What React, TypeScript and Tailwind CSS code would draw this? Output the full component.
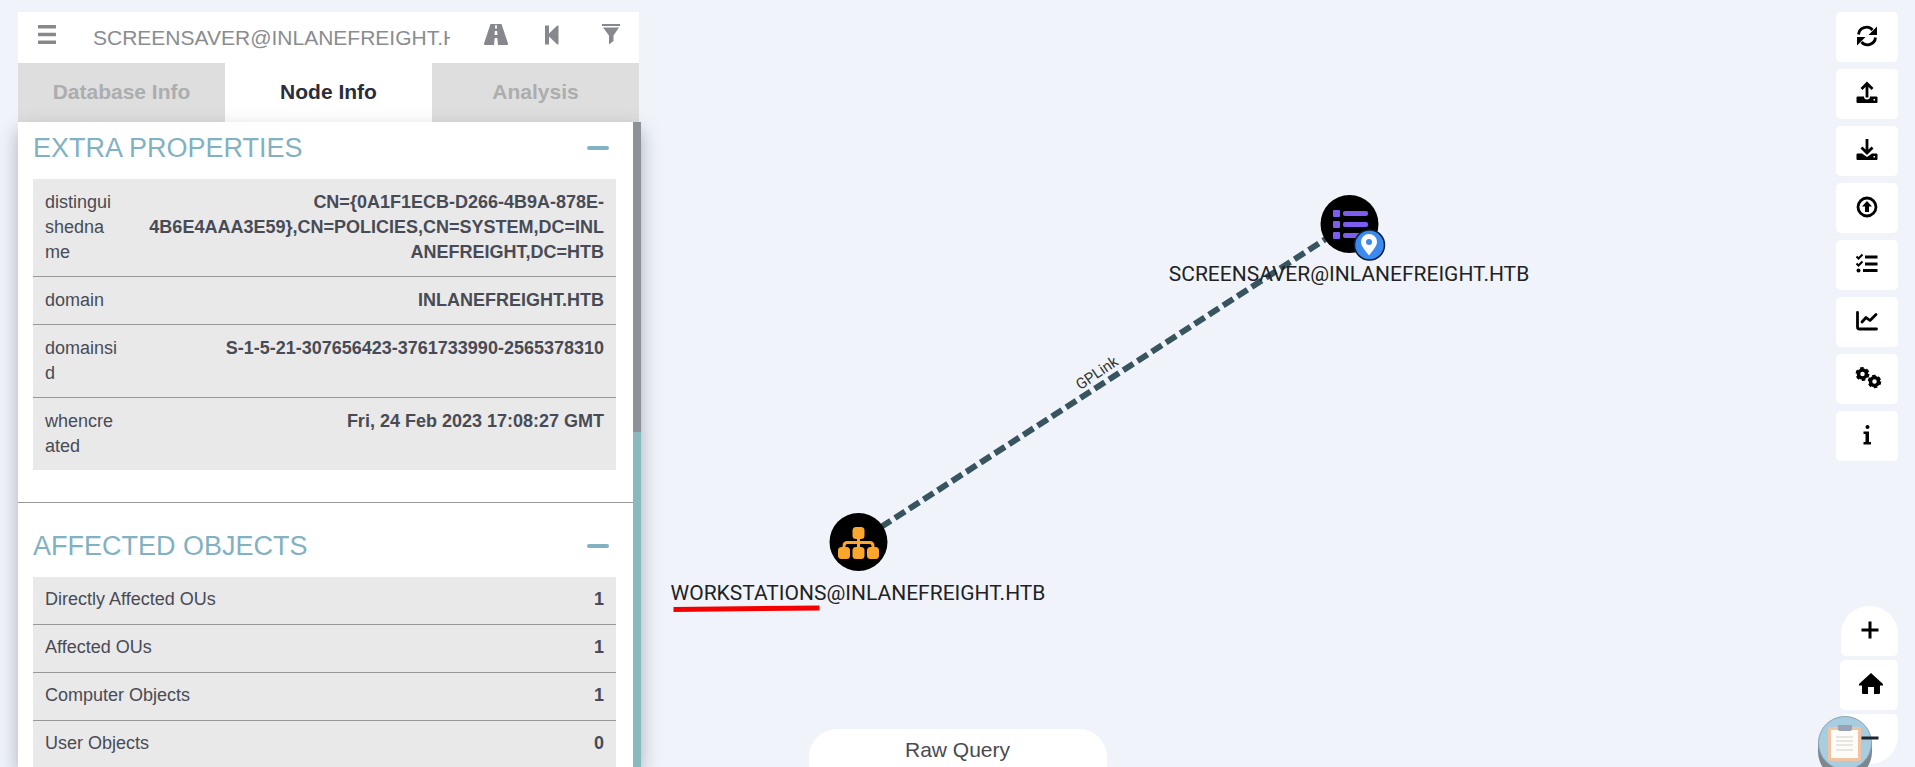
import { useState } from 'react';
import type { ReactNode } from 'react';

type Row = { label: string; value: string };

const extraProperties: Row[] = [
  {
    label: 'distinguishedname',
    value: 'CN={0A1F1ECB-D266-4B9A-878E-4B6E4AAA3E59},CN=POLICIES,CN=SYSTEM,DC=INLANEFREIGHT,DC=HTB',
  },
  { label: 'domain', value: 'INLANEFREIGHT.HTB' },
  { label: 'domainsid', value: 'S-1-5-21-307656423-3761733990-2565378310' },
  { label: 'whencreated', value: 'Fri, 24 Feb 2023 17:08:27 GMT' },
];

const affectedObjects: Row[] = [
  { label: 'Directly Affected OUs', value: '1' },
  { label: 'Affected OUs', value: '1' },
  { label: 'Computer Objects', value: '1' },
  { label: 'User Objects', value: '0' },
];

const tabs = ['Database Info', 'Node Info', 'Analysis'];

function BarsIcon() {
  return (
    <svg viewBox="0 0 18 19" className="h-[19px] w-[18px]" fill="currentColor" aria-hidden="true">
      <rect y="0" width="18" height="3.400" rx="0.5" />
      <rect y="7.800" width="18" height="3.400" rx="0.5" />
      <rect y="15.600" width="18" height="3.400" rx="0.5" />
    </svg>
  );
}

function RoadIcon() {
  return (
    <svg viewBox="0 0 24 21" className="h-[21px] w-6" fill="currentColor" aria-hidden="true">
      <path
        fillRule="evenodd"
        d="M6.500 0H17.500L24 19.500Q24.200 21 23 21H14L13.300 14H10.700L10 21H1Q-.200 21 0 19.500ZM11.300 1L11 4.500H13L12.700 1ZM10.900 7L10.500 11H13.500L13.100 7Z"
      />
    </svg>
  );
}

function BackIcon() {
  return (
    <svg viewBox="0 0 14 20" className="h-5 w-[14px]" fill="currentColor" aria-hidden="true">
      <path d="M0 .500H4V8.500L12 .800Q13.500 0 13.500 1.500V18.500Q13.500 20 12 19.200L4 11.500V19.500H0Z" />
    </svg>
  );
}

function FilterIcon() {
  return (
    <svg viewBox="0 0 18 21" className="h-[21px] w-[18px]" fill="currentColor" aria-hidden="true">
      <rect width="18" height="2" />
      <path d="M1 3.500h16L11.500 11.500V17L7 20.500V11.500Z" />
    </svg>
  );
}

function SearchBar() {
  return (
    <header className="flex h-[51px] items-center bg-white text-[#86888e]">
      <button type="button" aria-label="Menu" className="flex h-full w-[58px] items-center justify-center pb-1.5">
        <BarsIcon />
      </button>
      <input
        type="text"
        aria-label="Search for a node"
        defaultValue="SCREENSAVER@INLANEFREIGHT.HTB"
        className="ml-[17px] h-full min-w-0 flex-1 bg-transparent text-[21px] text-[#8a8c90] outline-none"
      />
      <div className="flex h-full items-center pb-1.5">
        <button type="button" aria-label="Pathfinding" className="flex w-[92px] justify-center">
          <RoadIcon />
        </button>
        <button type="button" aria-label="Back" className="flex w-5 justify-center">
          <BackIcon />
        </button>
        <button type="button" aria-label="Filter edges" className="flex w-[77px] justify-center pl-5">
          <FilterIcon />
        </button>
      </div>
    </header>
  );
}

function Section({ title, wrap, rows }: { title: string; wrap: boolean; rows: Row[] }) {
  return (
    <section className="pr-[17px] pl-[15px]">
      <div className="flex h-[57px] items-center justify-between pr-[7px] pb-1 text-[#82b1c2]">
        <h2 className="text-[27px]">{title}</h2>
        <button type="button" aria-label={'Collapse ' + title} className="flex h-6 w-[22px] items-center pb-0.5">
          <span className="h-1 w-full rounded-sm bg-[#82b1c2]" />
        </button>
      </div>
      <table className="w-full table-fixed bg-[#e9e9e9] text-[18px] leading-[25px] text-[#484b55]">
        <tbody>
          {rows.map((row) => (
            <tr key={row.label} className="border-b border-[#97989a] last:border-b-0">
              <th
                scope="row"
                className={
                  wrap
                    ? 'w-[97px] py-[11px] pr-3 pl-3 text-left align-top font-normal break-all'
                    : 'pt-[10px] pb-3 pl-3 text-left align-top font-normal'
                }
              >
                {row.label}
              </th>
              <td
                className={
                  wrap
                    ? 'py-[11px] pr-3 pl-4 text-right align-top font-bold wrap-break-word'
                    : 'pt-[10px] pr-3 pb-3 text-right align-top font-bold'
                }
              >
                {row.value}
              </td>
            </tr>
          ))}
        </tbody>
      </table>
    </section>
  );
}

function Panel() {
  const [active, setActive] = useState('Node Info');
  return (
    <aside className="flex w-[623px] shrink-0 flex-col pt-3">
      <div className="mr-[2px]">
        <SearchBar />
        <nav className="grid h-[59px] grid-cols-3 text-[21px] font-bold" role="tablist">
          {tabs.map((tab) => (
            <button
              key={tab}
              type="button"
              role="tab"
              aria-selected={tab === active}
              onClick={() => setActive(tab)}
              className={tab === active ? 'bg-white pb-0.5 text-[#2b2d3b]' : 'bg-[#dedede] pb-0.5 text-[#acadaf]'}
            >
              {tab}
            </button>
          ))}
        </nav>
      </div>
      <div className="flex min-h-0 flex-1 bg-white shadow-[0_8px_18px_rgba(40,50,70,0.35)]">
        <div className="min-w-0 flex-1 overflow-hidden">
          <Section title="EXTRA PROPERTIES" wrap rows={extraProperties} />
          <hr className="mt-8 mb-[17px] border-[#97989a]" />
          <Section title="AFFECTED OBJECTS" wrap={false} rows={affectedObjects} />
        </div>
        <div className="w-2 bg-[#89b9bd]" aria-hidden="true">
          <div className="h-[48%] bg-[#8d9299]" />
        </div>
      </div>
    </aside>
  );
}

function Graph() {
  return (
    <svg
      viewBox="0 0 1915 767"
      preserveAspectRatio="xMinYMin slice"
      className="absolute inset-0 h-full w-full"
      role="img"
      aria-label="Graph"
    >
      <line x1="858" y1="542" x2="1349" y2="224" stroke="#37545f" strokeWidth="6" strokeDasharray="12 5" strokeDashoffset="-27" />
      <text
        x="1097"
        y="378"
        transform="rotate(-34 1097 373)"
        textAnchor="middle"
        fill="#333"
        className="font-[Roboto,sans-serif] text-[15px]"
      >
        GPLink
      </text>

      <circle cx="1349.500" cy="224" r="29" fill="#000" />
      <g fill="#7f5cf0">
        <rect x="1333" y="210" width="7" height="7" rx="1" />
        <rect x="1333" y="221" width="7" height="7" rx="1" />
        <rect x="1333" y="232" width="7" height="7" rx="1" />
        <rect x="1343" y="211" width="25" height="5" rx="2" />
        <rect x="1343" y="222" width="25" height="5" rx="2" />
        <rect x="1343" y="233" width="25" height="5" rx="2" />
      </g>
      <circle cx="1369.500" cy="245" r="15" fill="#3b8af0" stroke="#0b1e38" strokeWidth="1.500" />
      <path
        fillRule="evenodd"
        fill="#fff"
        d="M1369 234a8 8 0 0 1 8 8c0 4-4.500 9-8 13.500c-3.500-4.500-8-9.500-8-13.500a8 8 0 0 1 8-8Zm0 5a3 3 0 1 0 0 6a3 3 0 0 0 0-6Z"
      />
      <text x="1349" y="281" textAnchor="middle" fill="#222" className="font-[Roboto,sans-serif] text-[21px]">
        SCREENSAVER@INLANEFREIGHT.HTB
      </text>

      <circle cx="858.500" cy="542" r="29" fill="#000" />
      <g fill="#fba62c">
        <rect x="852.500" y="527" width="12" height="12" rx="3.500" />
        <rect x="838" y="547" width="12" height="12" rx="3.500" />
        <rect x="852.500" y="547" width="12" height="12" rx="3.500" />
        <rect x="867" y="547" width="12" height="12" rx="3.500" />
      </g>
      <path
        d="M858.500 538v10M844 548v-2q0-3.500 3.500-3.500h22q3.500 0 3.500 3.500v2"
        fill="none"
        stroke="#fba62c"
        strokeWidth="3"
      />
      <text x="858" y="600" textAnchor="middle" fill="#222" className="font-[Roboto,sans-serif] text-[21px]">
        WORKSTATIONS@INLANEFREIGHT.HTB
      </text>
      <path d="M673.500 609.500L819.500 608" stroke="#f50000" strokeWidth="5" />
    </svg>
  );
}

const stroke = { fill: 'none', stroke: 'currentColor', strokeWidth: 2.8 };

const tools: { label: string; icon: ReactNode }[] = [
  {
    label: 'Refresh',
    icon: (
      <>
        <path {...stroke} d="M2.500 10.500A8 8 0 0 1 16.500 6M19.500 13.500A8 8 0 0 1 5.500 18" />
        <path d="M21 2.500v8.500h-8.500zM1 21.500v-8.500H9.500z" />
      </>
    ),
  },
  {
    label: 'Upload data',
    icon: (
      <>
        <path {...stroke} d="M11 16.500V3M5.500 8L11 2.500L16.500 8" />
        <path fillRule="evenodd" d="M1.500 15.500H8a3 3 0 0 0 6 0h6.500q1 0 1 1V21q0 1-1 1h-19q-1 0-1-1v-4.500q0-1 1-1ZM17.500 18v1.500H19V18Z" />
      </>
    ),
  },
  {
    label: 'Import graph',
    icon: (
      <>
        <path {...stroke} d="M11 1v14M5.500 9.500L11 15L16.500 9.500" />
        <path fillRule="evenodd" d="M1.500 15.500H6l5 3.500l5-3.500h4.500q1 0 1 1V21q0 1-1 1h-19q-1 0-1-1v-4.500q0-1 1-1ZM17.500 18v1.500H19V18Z" />
      </>
    ),
  },
  {
    label: 'Export graph',
    icon: (
      <>
        <circle {...stroke} cx="11" cy="12" r="9" />
        <path d="M11 6l5 5.500h-3V17H9v-5.500H6z" />
      </>
    ),
  },
  {
    label: 'Queries',
    icon: (
      <>
        <path {...stroke} d="M9 5h12.500M9 12h12.500M7 18.500h14.500" />
        <path fill="none" stroke="currentColor" strokeWidth="2" d="M.500 4.500l2 2L6.500 2.500M.500 11.500l2 2L6.500 9.500" />
        <circle cx="2.500" cy="18.500" r="2" />
      </>
    ),
  },
  {
    label: 'Statistics',
    icon: (
      <path {...stroke} strokeLinecap="round" strokeLinejoin="round" d="M1.500 3.500V18q0 2 2 2h17M6 13l4-4.500l4 3l6-6" />
    ),
  },
  {
    label: 'Settings',
    icon: (
      <>
        <circle cx="6.500" cy="8" r="4" fill="none" stroke="currentColor" strokeWidth="3.500" />
        <circle cx="6.500" cy="8" r="5.700" fill="none" stroke="currentColor" strokeWidth="2.500" strokeDasharray="3.400 2.570" />
        <circle cx="18.500" cy="15.500" r="4" fill="none" stroke="currentColor" strokeWidth="3.500" />
        <circle cx="18.500" cy="15.500" r="5.500" fill="none" stroke="currentColor" strokeWidth="2.500" strokeDasharray="3.300 2.460" />
      </>
    ),
  },
  {
    label: 'About',
    icon: (
      <>
        <circle cx="11.500" cy="4" r="2" />
        <path d="M7.500 8.500h5.500v10.500h2v2.500H7.500V19h2v-8h-2z" />
      </>
    ),
  },
];

function Toolbar() {
  return (
    <div className="flex flex-col gap-[7px]">
      {tools.map((tool) => (
        <button
          key={tool.label}
          type="button"
          aria-label={tool.label}
          className="flex h-[50px] w-[62px] items-center justify-center rounded-[5px] bg-white pb-0.5"
        >
          <svg viewBox="0 0 22 24" className="h-6 w-[22px] overflow-visible" fill="currentColor" aria-hidden="true">
            {tool.icon}
          </svg>
        </button>
      ))}
    </div>
  );
}

function ZoomControls() {
  return (
    <div className="flex flex-col items-end gap-1">
      <button
        type="button"
        aria-label="Zoom in"
        className="flex h-[50px] w-[57px] items-center justify-center rounded-t-[28px] rounded-b-[5px] bg-white pb-0.5"
      >
        <svg viewBox="0 0 18 18" className="h-[18px] w-[18px]" aria-hidden="true">
          <path d="M9 0.500v17M0.500 9h17" stroke="#000" strokeWidth="3" />
        </svg>
      </button>
      <button
        type="button"
        aria-label="Reset zoom"
        className="flex h-[50px] w-[58px] items-center justify-center rounded-[5px] bg-white pb-0.5 pl-1"
      >
        <svg viewBox="0 0 24 22" className="h-[22px] w-6" aria-hidden="true">
          <path d="M12 0L24 11v1.500h-3V20q0 1-1 1h-5v-7H9v7H4q-1 0-1-1v-7.500H0V11Z" />
        </svg>
      </button>
      <button
        type="button"
        aria-label="Zoom out"
        className="flex h-[50px] w-[57px] items-center justify-center rounded-t-[5px] rounded-b-[28px] bg-white pb-0.5"
      >
        <svg viewBox="0 0 18 4" className="relative z-20 h-1 w-[18px]" aria-hidden="true">
          <path d="M0.500 2h17" stroke="#1c2630" strokeWidth="3" />
        </svg>
      </button>
    </div>
  );
}

function ClipboardBadge() {
  return (
    <button type="button" aria-label="Clipboard" className="absolute right-[43px] bottom-0 z-10 h-[51px] w-[54px] overflow-hidden">
      <svg viewBox="0 0 54 51" className="h-[51px] w-[54px]" aria-hidden="true">
        <path d="M0 27v9a27 27 0 0 0 54 0v-9z" fill="#7d8790" />
        <circle cx="27" cy="27" r="26.500" fill="#a9cde0" stroke="#86a5b5" />
        <rect x="10" y="11" width="33" height="34" rx="2" fill="#f0c3a3" />
        <rect x="13" y="14" width="27" height="28" fill="#fdfcf8" />
        <path d="M18 21h17M18 25h17M18 29h17M18 34h17" stroke="#dddfd8" strokeWidth="1.500" />
        <path d="M20 9h14v4q0 2-2 2H22q-2 0-2-2z" fill="#9aa3b5" />
      </svg>
    </button>
  );
}

export default function App() {
  return (
    <div className="relative flex h-screen min-h-[640px] overflow-hidden bg-[#f0f4fa] pl-[18px] font-['Liberation_Sans',Arial,sans-serif]">
      <Graph />
      <div className="relative flex">
        <Panel />
      </div>
      <div className="relative ml-auto flex flex-col items-end justify-between pt-3 pr-[17px] pb-[3px]">
        <Toolbar />
        <ZoomControls />
      </div>
      <button
        type="button"
        className="absolute bottom-0 left-1/2 h-[38px] w-[298px] -translate-x-1/2 rounded-t-[28px] bg-white pt-1 text-[21px] text-[#484b4f]"
      >
        Raw Query
      </button>
      <ClipboardBadge />
    </div>
  );
}
